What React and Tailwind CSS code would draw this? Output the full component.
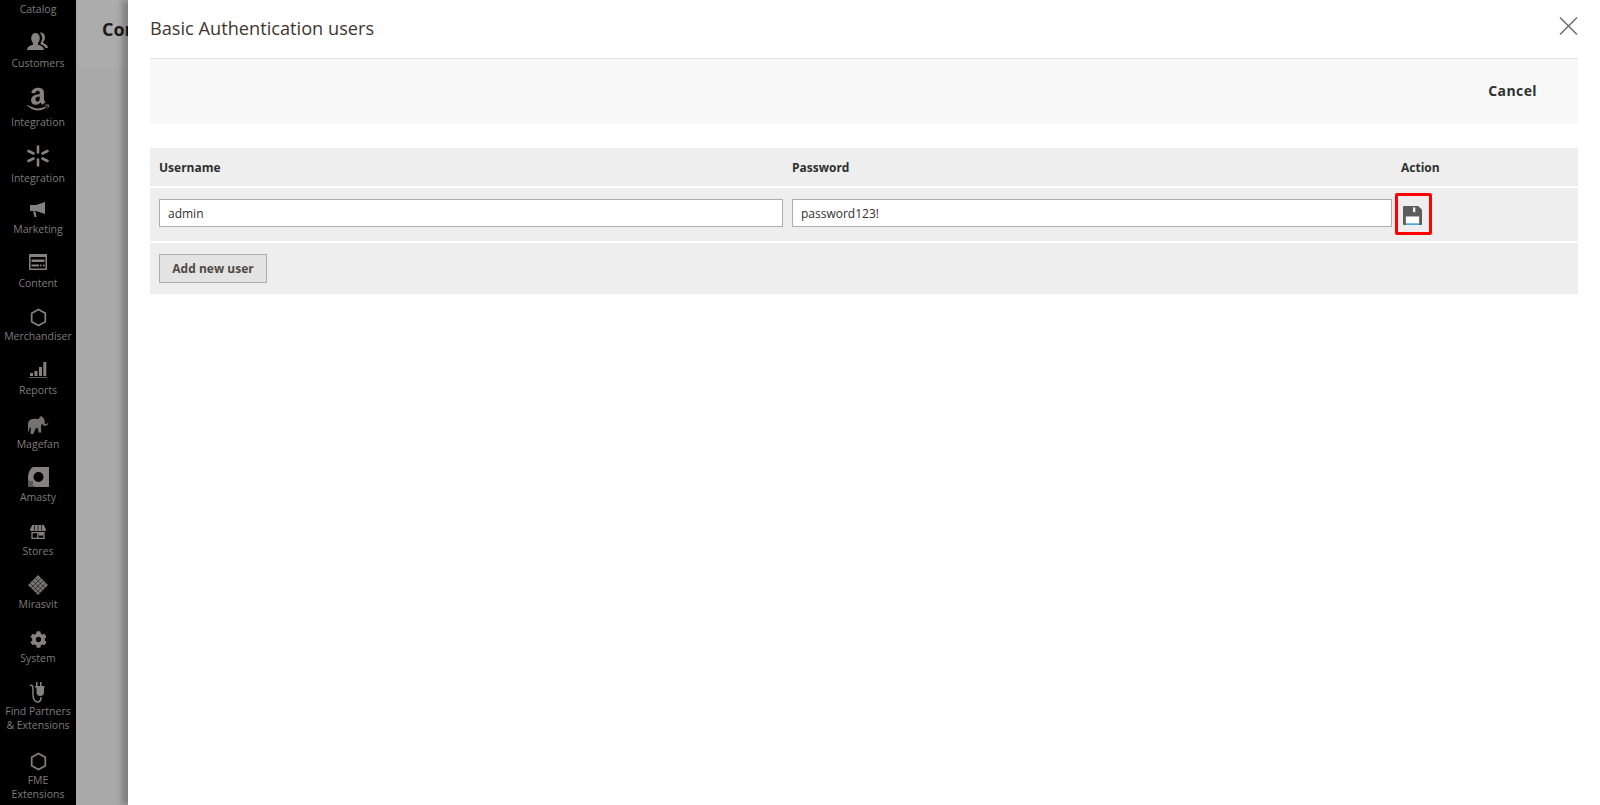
import React from "react";
import { FaAmazon, FaCog } from "react-icons/fa";

const C = "#84817e";
const Hex = () => (
  <svg width="17" height="19" viewBox="0 0 20 22" fill="none" stroke={C} strokeWidth="2"><path d="M10 1.500 18 6v10l-8 4.500L2 16V6z" /></svg>
);
const icons = {
  customers: (
    <svg width="22" height="20" viewBox="0 0 22 20" fill={C}>
      <path d="M0 18c.3-3 2-4 5-5 1-.4 1.300-1 1-2-1.200-1.300-1.800-3-1.800-5C4.200 3 6 1 8.500 1s4.300 2 4.300 5c0 2-.6 3.700-1.800 5-.3 1 0 1.600 1 2 3 1 4.600 2 5 5z" />
      <path d="M13 .5c2.500-.5 5 1.500 5 4.500 0 2-.6 3.500-1.700 4.800-.2.800 0 1.300.8 1.700 2 .8 3.500 1.800 3.900 4.500h-2.500c-.8-1.800-2.500-2.800-4.500-3.500-.5-.3-.7-.6-.6-1.300 1.200-1.600 1.800-3.500 1.800-5.400 0-2-.7-3.500-2.200-4.800z" />
    </svg>
  ),
  amazon: <FaAmazon size={26} color={C} />,
  spark: (
    <svg width="22" height="22" viewBox="0 0 22 22" stroke={C} strokeWidth="2.600" strokeLinecap="round">
      <path d="M11 1.500v6M11 14.500v6M1.500 6l5 2.500M15.500 13.500l5 2.500M1.500 16l5-2.500M15.500 8.500l5-2.500" />
    </svg>
  ),
  marketing: (
    <svg width="16" height="16" viewBox="0 0 16 16" fill={C}>
      <path d="M15 0v12L6 9H1C.4 9 0 8.500 0 8V4c0-.5.4-1 1-1h5z" />
      <path d="M3 9.500h2.500L6.500 15H4.500z" />
    </svg>
  ),
  content: (
    <svg width="18" height="16" viewBox="0 0 18 16" fill={C}>
      <path fillRule="evenodd" d="M1 0h16c.6 0 1 .4 1 1v14c0 .6-.4 1-1 1H1c-.6 0-1-.4-1-1V1c0-.6.4-1 1-1zm.5 3v11.500h15V3z" />
      <path d="M2.500 5.500h13V8h-13zM2.500 10.500h7.500V12.500H2.500zM11 10.500h1.500v2H11zM14 10.500h1.500v2H14z" />
    </svg>
  ),
  hex: <Hex />,
  reports: (
    <svg width="18" height="18" viewBox="0 0 18 18" fill={C}>
      <path d="M1 12h3v3H1zM5.500 10h3v5h-3zM10 6h3v9h-3zM14.300 1h3v14h-3zM0 16.200h18V17H0z" />
    </svg>
  ),
  elephant: (
    <svg width="21" height="18" viewBox="0 0 22 19" fill="#76736f">
      <path d="M0 7C1 4 4 3 7 3c2 0 3 .5 4.500 0 .5-2 2-3 3-3 .4 1 .6 1.500 1.500 2 1.200.8 1.500 2.500 1.500 4.500 0 2 1 2.500 2 2 .7-.3 1.200-.8 1.500-1.500l.5.5c-.5 1.500-1.800 3-3.500 3-1.500 0-2.500-1-3-2.500-.5 1-1 2-1.500 2.500l.5 7h-3l-.5-4.500H8L5.500 19h-3L3 12C1.500 12 .5 15 1 17l-1-1C-.5 13 0 10 0 7z" />
    </svg>
  ),
  amasty: (
    <svg width="21" height="20" viewBox="0 0 21 20" fill={C}>
      <path fillRule="evenodd" d="M5 0h16v20H8C3.500 20 0 16 0 11 0 6 2 2 5 0zm5.500 5a5 5 0 1 0 0 10 5 5 0 0 0 0-10z" />
      <path d="M0 14h5v6H0z" fill="#5a5856" />
    </svg>
  ),
  stores: (
    <svg width="16" height="16" viewBox="0 0 18 16" fill={C}>
      <path d="M2.500 0h13L18 5.500c0 1-.8 1.500-1.500 1.500H1.500C.8 7 0 6.500 0 5.500z" />
      <path d="M5 .5h.8l-.8 6h-.8zM8.600.5h.8v6h-.8zM12.200.5h.8l.8 6H13z" fill="#000" />
      <path fillRule="evenodd" d="M1.500 8H16.500v8H1.500zM3 9.500V14.500H8V9.500zM9.500 9.500V14.500H15V9.500z" />
      <path d="M10 9h5v3h-5z" />
    </svg>
  ),
  mirasvit: (
    <svg width="20" height="20" viewBox="0 0 20 20">
      <path d="M10 0 20 10 10 20 0 10z" fill="#76736f" />
      <path d="M7 3 17 13M4.500 5.500 14.500 15.500M2 8 12 18M13 3 3 13M15.500 5.500 5.500 15.500M18 8 8 18" stroke="#000" strokeWidth=".5" />
    </svg>
  ),
  system: <FaCog size={17} color={C} />,
  plug: (
    <svg width="18" height="21" viewBox="0 0 18 21" fill="none">
      <path d="M1 3.500c1.500-.8 2.500 0 2.800 1.500.2 2 .2 6 .2 8 0 3 1.500 7 4.500 7s3.500-2 3.500-5" stroke={C} strokeWidth="1.500" />
      <path d="M7 0h1.500v4h2.500V0h1.500v4H15.500v1.500H15v5c0 2-1.500 3.500-3.500 3.500h-.5c-2 0-3.500-1.500-3.500-3.500v-5H6V4h1z" fill={C} />
    </svg>
  ),
};

const items = [
  { h: "h-[51.5px]", icon: "customers", mb: "mb-[2px]", label: ["Customers"] },
  { h: "h-[59.5px]", icon: "amazon", mb: "mb-[4px]", label: ["Integration"] },
  { h: "h-[56px]", icon: "spark", mb: "mb-[3px]", label: ["Integration"] },
  { h: "h-[51px]", icon: "marketing", mb: "mb-0", label: ["Marketing"] },
  { h: "h-[54px]", icon: "content", mb: "mb-[2px]", label: ["Content"] },
  { h: "h-[53px]", icon: "hex", mb: "mb-0", label: ["Merchandiser"] },
  { h: "h-[54px]", icon: "reports", mb: "mb-px", label: ["Reports"] },
  { h: "h-[53.5px]", icon: "elephant", mb: "mb-0", label: ["Magefan"] },
  { h: "h-[53.5px]", icon: "amasty", mb: "mb-px", label: ["Amasty"] },
  { h: "h-[53.5px]", icon: "stores", mb: "mb-0", label: ["Stores"] },
  { h: "h-[53.5px]", icon: "mirasvit", mb: "mb-0", label: ["Mirasvit"] },
  { h: "h-[54px]", icon: "system", mb: "mb-0", label: ["System"] },
  { h: "h-[67px]", icon: "plug", mb: "mb-0", label: ["Find Partners", "& Extensions"] },
  { h: "h-[69px]", icon: "hex", mb: "mb-0", label: ["FME", "Extensions"] },
];

function SaveIcon() {
  return (
    <svg width="19" height="19" viewBox="0 0 20 20">
      <path d="M1 0h15l4 4v15c0 .6-.4 1-1 1H1c-.6 0-1-.4-1-1V1c0-.6.4-1 1-1z" fill="#5c5c5c" />
      <path d="M10.500 1.500h2.500v5h-2.500z" fill="#eeeeee" />
      <path d="M3 11h14v8H3z" fill="#ffffff" />
      <path d="M3 18.200h14V20H3z" fill="#4aa8dd" />
    </svg>
  );
}

export default function App() {
  return (
    <div className="flex h-[805px] w-[1600px] overflow-hidden bg-[#a9a9a9] font-['Open_Sans',sans-serif]">
      <nav className="flex w-[76px] shrink-0 flex-col overflow-hidden bg-black text-center text-[10.500px] leading-[14px] text-[#7f7c79]">
        <div className="h-[18px] shrink-0 pt-[2px]">Catalog</div>
        {items.map((it, i) => (
          <div key={i} className={`flex shrink-0 flex-col items-center justify-end ${it.h}`}>
            <div className={`flex h-6 items-center justify-center ${it.mb}`}>{icons[it.icon]}</div>
            {it.label.map((l) => (
              <div key={l} className="whitespace-nowrap">{l}</div>
            ))}
          </div>
        ))}
      </nav>

      <div className="relative w-[52px] shrink-0 overflow-hidden">
        <div className="h-[67px] overflow-hidden bg-[#acacac] pl-[26px] pt-[17px] text-[18px] font-bold leading-[24px] text-[#1c1a19]">Con</div>
      </div>

      <main className="relative flex-1 bg-white pl-[22px] pr-[22px] shadow-[-6px_0_6px_rgba(0,0,0,0.25)]">
        <header className="flex h-[59px] items-center border-b border-[#e3e3e3] pb-[3px]">
          <h1 className="text-[18.200px] font-normal leading-[24px] text-[#41362f]">Basic Authentication users</h1>
        </header>
        <button className="absolute right-[22px] top-[17px] text-[#736e69]" aria-label="Close">
          <svg width="19" height="18" viewBox="0 0 19 18" stroke="currentColor" strokeWidth="1.500" fill="none" className="block">
            <path d="M1 .5 18 17.500M18 .5 1 17.500" />
          </svg>
        </button>

        <div className="flex h-[65px] items-center justify-end bg-[#f8f8f8] pb-[2px] pr-[41px]">
          <span className="text-[14px] font-bold tracking-[0.4px] text-[#303030]">Cancel</span>
        </div>

        <div className="mt-6 flex flex-col gap-[2px] text-[12px] text-[#303030]">
          <div className="flex h-[38px] items-center bg-[#eeeeee] pt-[2px] font-bold">
            <div className="w-[642px] pl-[9px]">Username</div>
            <div className="w-[609px]">Password</div>
            <div>Action</div>
          </div>
          <div className="flex h-[53px] items-center bg-[#eeeeee]">
            <div className="w-[642px] pl-[9px]">
              <input readOnly value="admin" className="-mt-[3px] block h-[28px] w-[624px] border border-[#adadad] bg-white px-[8px] text-[12px] text-[#303030] outline-none" />
            </div>
            <div className="w-[603px]">
              <input readOnly value="password123!" className="-mt-[3px] block h-[28px] w-[600px] border border-[#adadad] bg-white px-[8px] text-[12px] text-[#303030] outline-none" />
            </div>
            <button className="-mt-[2px] flex h-[42px] w-[37px] items-center justify-center rounded-[2px] border-[3px] border-[#ff0000] bg-[#eeeeee] pr-[2px] pt-[3px]" aria-label="Save">
              <SaveIcon />
            </button>
          </div>
          <div className="flex h-[51px] items-center bg-[#eeeeee] pl-[9px]">
            <button className="h-[29px] w-[108px] border border-[#adadad] bg-[#e3e3e3] text-[12px] font-bold text-[#514943]">Add new user</button>
          </div>
        </div>
      </main>
    </div>
  );
}
